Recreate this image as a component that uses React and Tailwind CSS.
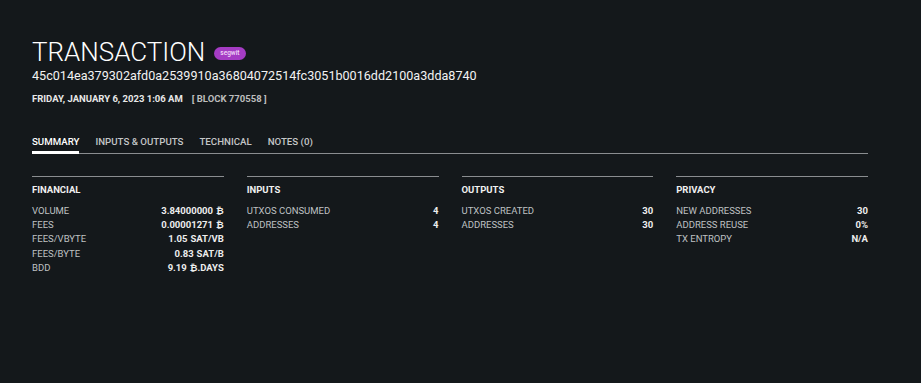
import React from "react";

const sections = [
  {
    title: "FINANCIAL",
    rows: [
      ["VOLUME", "3.84000000", "₿"],
      ["FEES", "0.00001271", "₿"],
      ["FEES/VBYTE", "1.05", "SAT/VB"],
      ["FEES/BYTE", "0.83", "SAT/B"],
      ["BDD", "9.19", "₿.DAYS"],
    ],
  },
  {
    title: "INPUTS",
    rows: [
      ["UTXOS CONSUMED", "4"],
      ["ADDRESSES", "4"],
    ],
  },
  {
    title: "OUTPUTS",
    rows: [
      ["UTXOS CREATED", "30"],
      ["ADDRESSES", "30"],
    ],
  },
  {
    title: "PRIVACY",
    rows: [
      ["NEW ADDRESSES", "30"],
      ["ADDRESS REUSE", "0%"],
      ["TX ENTROPY", "N/A"],
    ],
  },
];

const tabs = ["SUMMARY", "INPUTS & OUTPUTS", "TECHNICAL", "NOTES (0)"];

export default function App() {
  return (
    <main
      className="w-[921px] h-[383px] bg-[#14181b] text-[#e6e6e6] overflow-hidden"
      style={{ fontFamily: "Roboto, 'DejaVu Sans', sans-serif" }}
    >
      <div className="pl-[32px] pr-[53px] pt-[36px]">
        {/* header */}
        <div className="flex items-center gap-[9px] h-[32px]">
          <h1 className="text-[26px] font-light leading-none text-white">TRANSACTION</h1>
          <span className="mt-[3px] rounded-full bg-[#a53cc4] px-[6px] h-[13px] flex items-center text-[6.5px] font-medium leading-none text-[#f0d8f7]">
            segwit
          </span>
        </div>
        <div className="text-[12.6px] leading-none text-[#f2f2f2] mt-[2px]">
          45c014ea379302afd0a2539910a36804072514fc3051b0016dd2100a3dda8740
        </div>
        <div className="flex items-center gap-[9px] mt-[11px] text-[9.5px] font-bold leading-none">
          <span className="text-[#e8e8e8]">FRIDAY, JANUARY 6, 2023 1:06 AM</span>
          <span className="text-[#bdbdbd]">[ BLOCK 770558 ]</span>
        </div>

        {/* tabs */}
        <div className="mt-[34px] flex gap-[16px] border-b border-[#8a8d90] text-[9.7px] font-medium leading-none">
          {tabs.map((t, i) => (
            <div
              key={t}
              className={
                i === 0
                  ? "pb-[3px] border-b-[3px] border-white text-white -mb-[1px]"
                  : "pb-[6px] text-[#c4c6c8]"
              }
            >
              {t}
            </div>
          ))}
        </div>

        {/* summary grid */}
        <div className="mt-[22px] grid grid-cols-4 gap-[23px]">
          {sections.map((s) => (
            <div key={s.title} className="border-t border-[#8a8d90] pt-[8px]">
              <div className="text-[9.5px] font-bold leading-none text-[#f0f0f0] mb-[9px]">{s.title}</div>
              {s.rows.map(([k, v, u]) => (
                <div key={k} className="flex justify-between items-center h-[14.3px] text-[9.5px] leading-none">
                  <span className="text-[#bfc1c3]">{k}</span>
                  <span className="font-bold text-[#ededed]">
                    {v}
                    {u && <span className="ml-[3px]">{u}</span>}
                  </span>
                </div>
              ))}
            </div>
          ))}
        </div>
      </div>
    </main>
  );
}
